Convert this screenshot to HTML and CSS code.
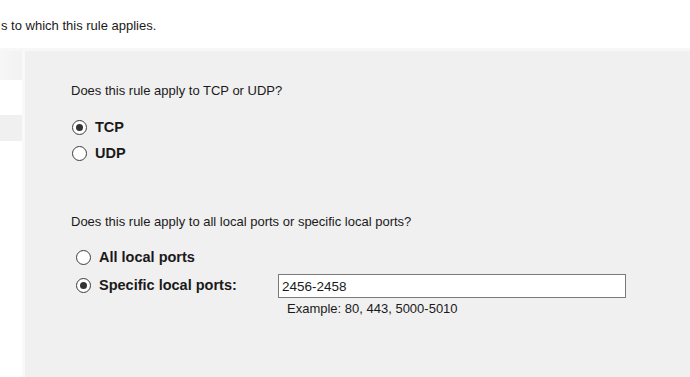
FILE: index.html
```html
<!DOCTYPE html>
<html lang="en">
<head>
  <meta charset="UTF-8" />
  <title>New Inbound Rule Wizard - Protocol and Ports</title>
  <link rel="stylesheet" href="styles.css">
</head>
<body>

  <div class="header">
    <p class="subtitle">s to which this rule applies.</p>
  </div>

  <div class="wizard">
    <ul class="steps">
      <li class="step step-top"></li>
      <li class="step"></li>
      <li class="step step-current"></li>
      <li class="step"></li>
    </ul>

    <div class="page">
      <p class="question">Does this rule apply to TCP or UDP?</p>
      <div class="options">
        <label class="option"><span class="radio checked"></span>TCP</label>
        <label class="option"><span class="radio"></span>UDP</label>
      </div>

      <p class="question second">Does this rule apply to all local ports or specific local ports?</p>
      <div class="options ports">
        <label class="option"><span class="radio"></span>All local ports</label>
        <div class="port-row">
          <label class="option port-label"><span class="radio checked"></span>Specific local ports:</label>
          <div class="port-field">
            <input type="text" class="port-input" value="2456-2458" />
            <span class="hint">Example: 80, 443, 5000-5010</span>
          </div>
        </div>
      </div>
    </div>
  </div>

</body>
</html>
```

FILE: styles.css
```css
body {
  margin: 0;
  font-family: "Liberation Sans", Arial, sans-serif;
  font-size: 13px;
  color: #1a1a1a;
  background: #f0f0f0;
  height: 377px;
  overflow: hidden;
}

.header {
  background: #fff;
  height: 48px;
  border-bottom: 3px solid #f7f7f7;
}

.subtitle {
  margin: 0;
  padding-top: 18px;
  padding-left: 1px;
}

.wizard {
  display: flex;
  height: 326px;
}

.steps {
  list-style: none;
  margin: 0;
  padding: 0;
  width: 22px;
  background: #fff;
  border-right: 3px solid #f9f9f9;
}

.step {
  height: 29px;
  margin-bottom: 3px;
}

.step-top {
  background: linear-gradient(to right, #f6f6f6, #f2f2f2);
}

.step-current {
  background: #f0f0f0;
  height: 26px;
}

.page {
  flex: 1;
  padding: 32px 0 0 46px;
}

.question {
  margin: 0 0 20px 0;
  line-height: 16px;
}

.question.second {
  margin-top: 53px;
  margin-bottom: 19px;
}

.options {
  display: flex;
  flex-direction: column;
  gap: 10px;
}

.options.ports {
  gap: 8px;
}

.option {
  display: flex;
  align-items: center;
  font-weight: bold;
  font-size: 14.5px;
  height: 16px;
}

.radio {
  width: 13px;
  height: 13px;
  border: 1px solid #3c3c3c;
  border-radius: 50%;
  background: #fff;
  margin: 0 8px 0 1px;
  position: relative;
}

.ports .radio {
  margin-left: 5px;
}

.radio.checked::after {
  content: "";
  position: absolute;
  left: 3px;
  top: 3px;
  width: 7px;
  height: 7px;
  border-radius: 50%;
  background: #333;
}

.port-row {
  display: flex;
  align-items: flex-start;
}

.port-label {
  width: 207px;
  height: 24px;
}

.port-field {
  display: flex;
  flex-direction: column;
  padding-top: 1px;
}

.port-input {
  width: 340px;
  height: 22px;
  margin: 0;
  padding: 0 3px;
  border: 1px solid #7a7a7a;
  font-family: inherit;
  font-size: 13.5px;
  color: #1a1a1a;
}

.hint {
  margin: 3px 0 0 9px;
}
```
